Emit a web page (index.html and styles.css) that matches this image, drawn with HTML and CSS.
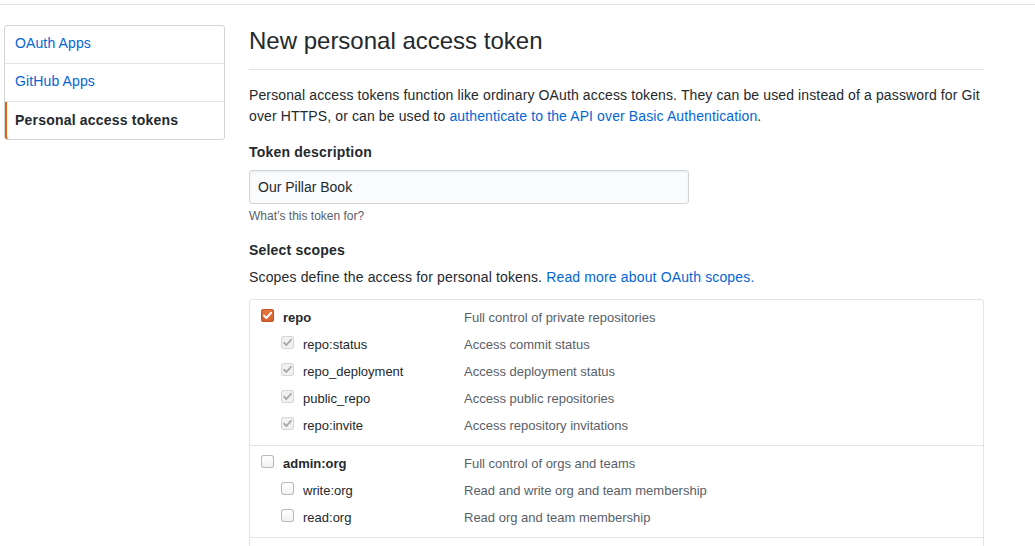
FILE: index.html
```html
<!DOCTYPE html>
<html lang="en">
<head>
<meta charset="utf-8">
<title>New personal access token</title>
<link rel="stylesheet" href="styles.css">
</head>
<body>
<header class="topbar"></header>
<div class="page">
  <nav class="menu">
    <a class="menu-item" href="#">OAuth Apps</a>
    <a class="menu-item" href="#">GitHub Apps</a>
    <a class="menu-item selected" href="#">Personal access tokens</a>
  </nav>
  <main class="content">
    <div class="subhead">
      <h1 class="subhead-heading">New personal access token</h1>
    </div>
    <p class="intro">Personal access tokens function like ordinary OAuth access tokens. They can be used instead of a password for Git over HTTPS, or can be used to <a href="#">authenticate to the API over Basic Authentication</a>.</p>

    <div class="form-group">
      <label class="form-label" for="desc">Token description</label>
      <input class="form-control" id="desc" type="text" value="Our Pillar Book">
      <p class="note">What’s this token for?</p>
    </div>

    <div class="form-group">
      <div class="form-label">Select scopes</div>
      <p class="scopes-intro">Scopes define the access for personal tokens. <a href="#">Read more about OAuth scopes.</a></p>
    </div>

    <div class="scopes">
      <div class="scope-group">
        <div class="scope-row">
          <div class="scope-name parent"><span class="cb cb-on"><svg viewBox="0 0 13 13" width="13" height="13"><path d="M3 6.6 L5.4 9 L10 3.8" fill="none" stroke="#fff" stroke-width="2" stroke-linecap="round" stroke-linejoin="round"/></svg></span>repo</div>
          <div class="scope-desc">Full control of private repositories</div>
        </div>
        <div class="scope-row">
          <div class="scope-name child"><span class="cb cb-dim"><svg viewBox="0 0 13 13" width="13" height="13"><path d="M3 6.6 L5.4 9 L10 3.8" fill="none" stroke="#a8a8a8" stroke-width="1.8" stroke-linecap="round" stroke-linejoin="round"/></svg></span>repo:status</div>
          <div class="scope-desc">Access commit status</div>
        </div>
        <div class="scope-row">
          <div class="scope-name child"><span class="cb cb-dim"><svg viewBox="0 0 13 13" width="13" height="13"><path d="M3 6.6 L5.4 9 L10 3.8" fill="none" stroke="#a8a8a8" stroke-width="1.8" stroke-linecap="round" stroke-linejoin="round"/></svg></span>repo_deployment</div>
          <div class="scope-desc">Access deployment status</div>
        </div>
        <div class="scope-row">
          <div class="scope-name child"><span class="cb cb-dim"><svg viewBox="0 0 13 13" width="13" height="13"><path d="M3 6.6 L5.4 9 L10 3.8" fill="none" stroke="#a8a8a8" stroke-width="1.8" stroke-linecap="round" stroke-linejoin="round"/></svg></span>public_repo</div>
          <div class="scope-desc">Access public repositories</div>
        </div>
        <div class="scope-row">
          <div class="scope-name child"><span class="cb cb-dim"><svg viewBox="0 0 13 13" width="13" height="13"><path d="M3 6.6 L5.4 9 L10 3.8" fill="none" stroke="#a8a8a8" stroke-width="1.8" stroke-linecap="round" stroke-linejoin="round"/></svg></span>repo:invite</div>
          <div class="scope-desc">Access repository invitations</div>
        </div>
      </div>

      <div class="scope-group">
        <div class="scope-row">
          <div class="scope-name parent"><span class="cb cb-off"></span>admin:org</div>
          <div class="scope-desc">Full control of orgs and teams</div>
        </div>
        <div class="scope-row">
          <div class="scope-name child"><span class="cb cb-off"></span>write:org</div>
          <div class="scope-desc">Read and write org and team membership</div>
        </div>
        <div class="scope-row">
          <div class="scope-name child"><span class="cb cb-off"></span>read:org</div>
          <div class="scope-desc">Read org and team membership</div>
        </div>
      </div>

      <div class="scope-group">
        <div class="scope-row">
          <div class="scope-name parent"><span class="cb cb-off"></span>admin:public_key</div>
          <div class="scope-desc">Full control of user public keys</div>
        </div>
      </div>
    </div>
  </main>
</div>
</body>
</html>
```
FILE: styles.css
```css
* {
  box-sizing: border-box;
}

html, body {
  margin: 0;
  padding: 0;
  background: #fff;
}

body {
  font-family: "Liberation Sans", Arial, Helvetica, sans-serif;
  font-size: 14px;
  line-height: 1.5;
  color: #24292e;
  overflow: hidden;
}

a {
  color: #0366d6;
  text-decoration: none;
}

.topbar {
  height: 5px;
  border-bottom: 1px solid #e1e4e8;
}

.page {
  display: flex;
  align-items: flex-start;
  gap: 24px;
  padding: 20px 0 0 4px;
}

/* Sidebar menu */
.menu {
  width: 221px;
  flex: none;
  display: flex;
  flex-direction: column;
  border: 1px solid #d1d5da;
  border-radius: 3px;
  background: #fff;
}

.menu-item {
  display: block;
  padding: 7px 10px 9px;
  line-height: 21px;
  font-size: 14px;
  letter-spacing: 0.12px;
  color: #0366d6;
  border-bottom: 1px solid #e1e4e8;
}

.menu-item:last-child {
  border-bottom: 0;
}

.menu-item.selected {
  font-weight: bold;
  color: #24292e;
  padding: 8px 10px;
  letter-spacing: 0.2px;
  box-shadow: inset 2px 0 0 #e36209;
  border-bottom-left-radius: 2px;
}

/* Main column */
.content {
  width: 735px;
  flex: none;
}

.subhead {
  padding-bottom: 12px;
  border-bottom: 1px solid #e1e4e8;
  margin-bottom: 15px;
}

.subhead-heading {
  margin: 0;
  font-size: 24px;
  font-weight: normal;
  line-height: 32px;
  color: #24292e;
}

.intro {
  margin: 0 0 15px;
  line-height: 21px;
  letter-spacing: 0.12px;
}

.form-group {
  margin-bottom: 15px;
}

.form-label {
  display: block;
  font-weight: bold;
  line-height: 21px;
  letter-spacing: 0.2px;
  margin-bottom: 7px;
}

.form-control {
  display: block;
  width: 440px;
  height: 34px;
  padding: 6px 8px;
  font-family: inherit;
  font-size: 14px;
  line-height: 20px;
  color: #24292e;
  background: #fafbfc;
  border: 1px solid #d1d5da;
  border-radius: 3px;
  box-shadow: inset 0 1px 2px rgba(27, 31, 35, 0.075);
  outline: none;
}

.note {
  margin: 3px 0 0;
  font-size: 12px;
  line-height: 18px;
  color: #586069;
}

.form-group + .form-group .form-label {
  margin-bottom: 6px;
}

.scopes-intro {
  margin: 0;
  line-height: 21px;
  letter-spacing: 0.15px;
  padding-bottom: 11px;
}

/* Scopes box */
.scopes {
  border: 1px solid #e1e4e8;
  border-radius: 3px;
  margin-top: -15px;
}

.scope-group {
  padding: 4px 0 6px;
  border-top: 1px solid #e1e4e8;
}

.scope-group:first-child {
  border-top: 0;
}

.scope-row {
  display: flex;
  align-items: center;
  height: 27px;
  padding-left: 11px;
  font-size: 13px;
}

.scope-name {
  width: 203px;
  flex: none;
  display: flex;
  align-items: center;
  gap: 9px;
  color: #24292e;
}

.scope-name.parent {
  font-weight: bold;
}

.scope-name.child {
  padding-left: 20px;
}

.scope-desc {
  color: #586069;
}

/* Checkboxes */
.cb {
  width: 13px;
  height: 13px;
  flex: none;
  border-radius: 3px;
  margin-top: -4px;
  display: flex;
}

.cb svg {
  display: block;
}

.cb-on {
  background: linear-gradient(#e8773f, #d4602f);
  box-shadow: inset 0 0 0 1px #bf5428;
}

.cb-dim {
  background: #f1f1f1;
  box-shadow: inset 0 0 0 1px #d6d6d6;
}

.cb-off {
  background: linear-gradient(#ffffff, #f1f1f1);
  box-shadow: inset 0 0 0 1px #b9b9b9;
}
```
